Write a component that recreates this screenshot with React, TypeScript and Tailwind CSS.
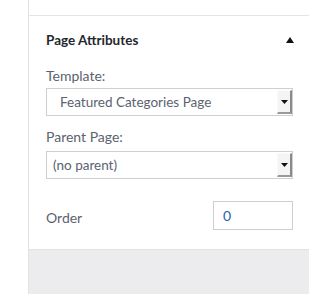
import React from "react";

function Arrow() {
  return (
    <div className="w-[15px] h-full flex items-center justify-center bg-[#f4f4f4] border-l border-t border-l-[#fafafa] border-t-[#fafafa] border-r-2 border-b-2 border-r-[#8a8a8a] border-b-[#9a9a9a]">
      <svg width="7" height="4" viewBox="0 0 7 4"><path d="M0 0H7L3.5 4Z" fill="#111" /></svg>
    </div>
  );
}

function Select({ text, pl }: { text: string; pl: string }) {
  return (
    <div className="h-[28px] border border-[#cfcfcf] flex items-stretch bg-white">
      <div className={`flex-1 overflow-hidden ${pl}`}>
        <div className="h-[20px] overflow-hidden pt-[6px] text-[13.5px] leading-[15px] text-[#5b6270]">{text}</div>
      </div>
      <div className="py-[1px] flex"><Arrow /></div>
    </div>
  );
}

export default function App() {
  return (
    <div className="w-[309px] h-[294px] bg-white flex" style={{ fontFamily: "Lato, 'Open Sans', sans-serif" }}>
      <div className="w-[29px] border-r border-[#e2e2e2] bg-white" />
      <div className="flex-1 flex flex-col">
        <div className="h-[16px] border-b border-[#e4e4e4]" />
        <div className="h-[233px] pl-[17px] pr-[16px] flex flex-col">
          <div className="flex items-center justify-between mt-[15px] h-[18px]">
            <span className="text-[13.5px] font-bold text-[#23282d]">Page Attributes</span>
            <svg width="8" height="6" viewBox="0 0 8 6" className="mr-[-1px]"><path d="M0 6H8L4 0Z" fill="#111" /></svg>
          </div>
          <div className="mt-[19px] text-[14px] leading-[16px] text-[#5b6270]">Template:</div>
          <div className="mt-[4px]"><Select text="Featured Categories Page" pl="pl-[13px]" /></div>
          <div className="mt-[13px] text-[14px] leading-[16px] text-[#5b6270]">Parent Page:</div>
          <div className="mt-[6px]"><Select text="(no parent)" pl="pl-[6px]" /></div>
          <div className="mt-[22px] flex items-center justify-between">
            <span className="text-[14px] leading-[16px] pt-[4px] text-[#5b6270]">Order</span>
            <div className="w-[80px] h-[29px] border border-[#cfcfcf] flex items-center pl-[9px] text-[14px] text-[#2a5db0]">0</div>
          </div>
        </div>
        <div className="flex-1 bg-[#ececee] border-t border-[#e2e2e2]" />
      </div>
    </div>
  );
}
